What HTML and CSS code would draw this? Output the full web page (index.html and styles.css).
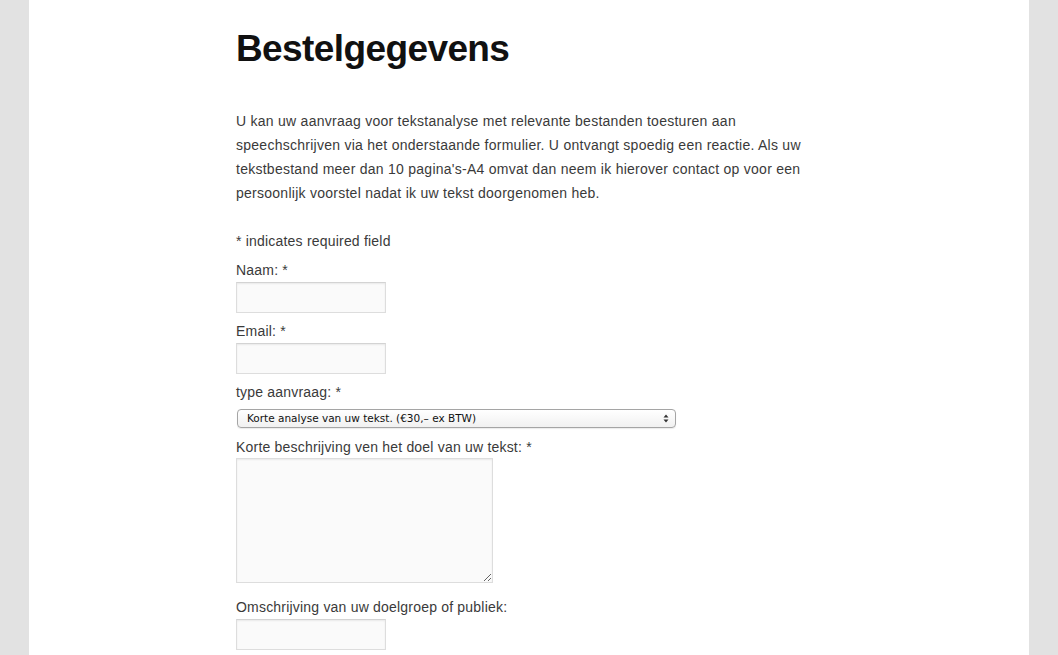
FILE: index.html
```html
<!DOCTYPE html>
<html>
<head>
  <link rel="stylesheet" href="styles.css">
</head>
<body>
  <div class="page">
    <div class="content">
      <h1 class="title">Bestelgegevens</h1>

      <p class="intro">U kan uw aanvraag voor tekstanalyse met relevante bestanden toesturen aan speechschrijven via het onderstaande formulier. U ontvangt spoedig een reactie. Als uw tekstbestand meer dan 10 pagina's-A4 omvat dan neem ik hierover contact op voor een persoonlijk voorstel nadat ik uw tekst doorgenomen heb.</p>

      <form class="order-form">
        <div class="required-note">* indicates required field</div>

        <div class="field">
          <label for="naam">Naam: *</label>
          <input type="text" id="naam" class="text-input">
        </div>

        <div class="field">
          <label for="email">Email: *</label>
          <input type="text" id="email" class="text-input">
        </div>

        <div class="field">
          <label for="type">type aanvraag: *</label>
          <div class="select-box" id="type">
            <span>Korte analyse van uw tekst. (€30,– ex BTW)</span>
            <span class="select-arrows">
              <svg width="6" height="9" viewBox="0 0 6 9"><path d="M0.5 3.5 L3 0.5 L5.5 3.5 Z M0.5 5.5 L3 8.5 L5.5 5.5 Z" fill="#333"/></svg>
            </span>
          </div>
        </div>

        <div class="field field-area">
          <label for="doel">Korte beschrijving ven het doel van uw tekst: *</label>
          <textarea id="doel" class="text-area"></textarea>
        </div>

        <div class="field field-last">
          <label for="publiek">Omschrijving van uw doelgroep of publiek:</label>
          <input type="text" id="publiek" class="text-input">
        </div>
      </form>
    </div>
  </div>
</body>
</html>
```

FILE: styles.css
```css
html, body {
  margin: 0;
  padding: 0;
}

body {
  background-color: #e2e2e2;
  font-family: "Liberation Sans", Helvetica, Arial, sans-serif;
  color: #3a3a3a;
  overflow: hidden;
}

.page {
  width: 1000px;
  min-height: 655px;
  margin-left: 29px;
  background-color: #fff;
}

.content {
  padding: 29px 0 0 207px;
  width: 600px;
}

.title {
  margin: 0;
  font-size: 37px;
  line-height: 40px;
  font-weight: bold;
  color: #111;
  letter-spacing: -0.6px;
}

.intro {
  margin: 40px 0 0;
  font-size: 14px;
  line-height: 24px;
  letter-spacing: 0.26px;
  width: 580px;
}

.order-form {
  margin-top: 24px;
  font-size: 14px;
  line-height: 24px;
  letter-spacing: 0.2px;
}

.required-note {
  margin-bottom: 5px;
}

.field {
  margin-bottom: 6px;
}

.field label {
  display: block;
}

.text-input {
  display: block;
  box-sizing: border-box;
  width: 150px;
  height: 31px;
  margin: 0;
  padding: 4px;
  border: 1px solid #ddd;
  border-top-color: #d3d3d3;
  background: #fafafa;
  box-shadow: inset 0 1px 2px rgba(0, 0, 0, 0.07);
  font: inherit;
}

.select-box {
  display: flex;
  align-items: center;
  justify-content: space-between;
  box-sizing: border-box;
  width: 439px;
  height: 19px;
  margin: 5px 0 7px 1px;
  padding: 0 6px 0 9px;
  border: 1px solid #a5a5a5;
  border-radius: 4px;
  background: linear-gradient(#fff, #f1f1f1);
  box-shadow: 0 1px 1px rgba(0, 0, 0, 0.08);
  font-family: "DejaVu Sans", "Lucida Grande", sans-serif;
  font-size: 10.5px;
  line-height: 17px;
  letter-spacing: 0;
  color: #111;
}

.select-arrows {
  display: flex;
}

.text-area {
  display: block;
  box-sizing: border-box;
  width: 257px;
  height: 125px;
  margin: -1px 0 0;
  padding: 4px;
  border: 1px solid #ddd;
  background: #fafafa;
  box-shadow: inset 0 1px 2px rgba(0, 0, 0, 0.07);
  font: inherit;
}

.field-area {
  margin-bottom: 12px;
}
```
